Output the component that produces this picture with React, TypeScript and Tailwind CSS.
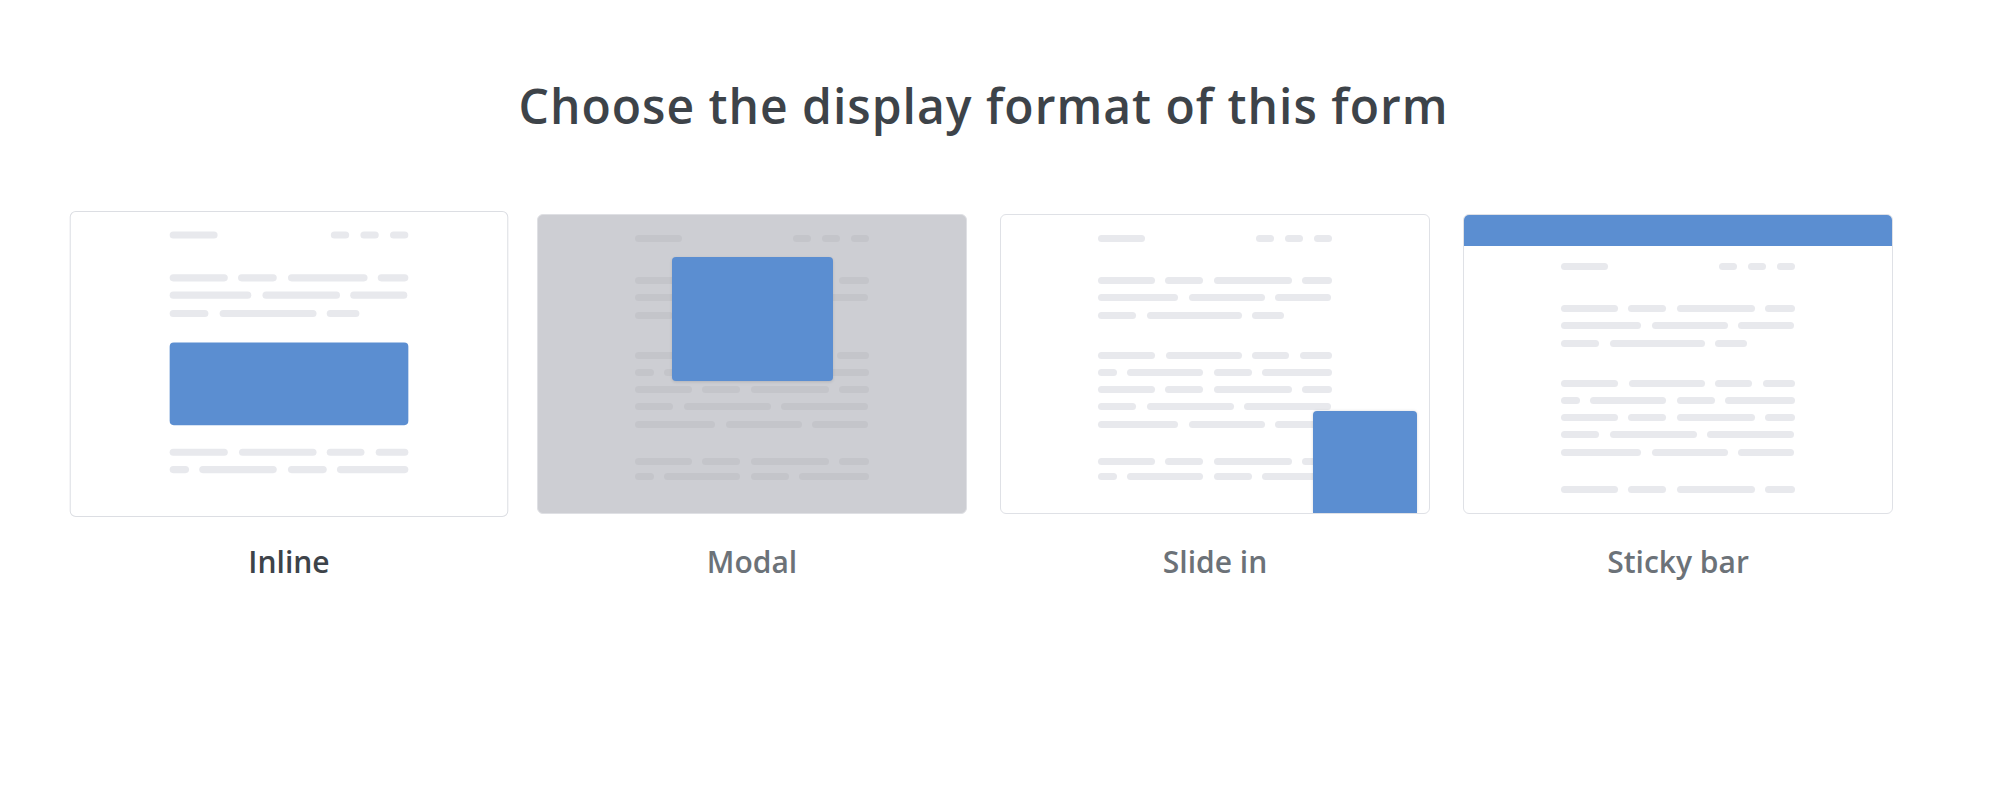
const ROW_A = [57, 38, 78, 30];
const ROW_B = [80, 76, 56];
const ROW_C = [38, 95, 32];
const ROW_D = [57, 76, 37, 32];
const ROW_E = [19, 76, 38, 70];
const ROW_F = [38, 87, 87];

type Tone = "light" | "dark";

const barTone = (tone: Tone) => (tone === "dark" ? "bg-[#c4c5ca]" : "bg-[#e8e9ed]");

function Line({ widths, tone }: { widths: number[]; tone: Tone }) {
  return (
    <div className="flex w-[234px] gap-[10.5px]">
      {widths.map((w, i) => (
        <span key={i} style={{ width: w }} className={`h-[7px] rounded-full ${barTone(tone)}`} />
      ))}
    </div>
  );
}

function Paragraph({ rows, tone, className = "", tight }: { rows: number[][]; tone: Tone; className?: string; tight?: boolean }) {
  return (
    <div className={`flex flex-col ${tight ? "gap-[8.3px]" : "gap-[10.3px]"} ${className}`}>
      {rows.map((r, i) => (
        <Line key={i} widths={r} tone={tone} />
      ))}
    </div>
  );
}

function PageHeader({ tone }: { tone: Tone }) {
  return (
    <div className="flex w-[234px] items-center justify-between">
      <span className={`h-[7px] w-[47px] rounded-full ${barTone(tone)}`} />
      <div className="flex gap-[11px]">
        <span className={`h-[7px] w-[18px] rounded-full ${barTone(tone)}`} />
        <span className={`h-[7px] w-[18px] rounded-full ${barTone(tone)}`} />
        <span className={`h-[7px] w-[18px] rounded-full ${barTone(tone)}`} />
      </div>
    </div>
  );
}

function LongPage({ tone, lastRows }: { tone: Tone; lastRows: number[][] }) {
  return (
    <>
      <PageHeader tone={tone} />
      <Paragraph rows={[ROW_A, ROW_B, ROW_C]} tone={tone} className="mt-[35px]" />
      <Paragraph rows={[ROW_D, ROW_E, ROW_A, ROW_F, ROW_B]} tone={tone} className="mt-[33px]" />
      <Paragraph rows={lastRows} tone={tone} className="mt-[30px]" tight />
    </>
  );
}

const cardBase = "relative flex h-[300px] w-[430px] flex-col items-center overflow-hidden rounded-[6px] border";
const blue = "bg-[#5b8ed1]";

function InlinePreview() {
  return (
    <div className={`${cardBase} scale-[1.02] border-[#dcdee3] bg-white pt-[19px]`}>
      <PageHeader tone="light" />
      <Paragraph rows={[ROW_A, ROW_B, ROW_C]} tone="light" className="mt-[35px]" />
      <div className={`mt-[25px] h-[81px] w-[234px] rounded-[4px] ${blue}`} />
      <Paragraph rows={[ROW_D, ROW_E]} tone="light" className="mt-[23px]" />
    </div>
  );
}

function ModalPreview() {
  return (
    <div className={`${cardBase} border-[#dfe0e4] bg-[#cdced3] pt-[20px]`}>
      <LongPage tone="dark" lastRows={[ROW_A, ROW_E]} />
      <div className={`absolute left-[134px] top-[42px] h-[124px] w-[161px] rounded-[4px] shadow-[0_1px_3px_rgba(0,0,0,0.12)] ${blue}`} />
    </div>
  );
}

function SlideInPreview() {
  return (
    <div className={`${cardBase} border-[#dfe1e6] bg-white pt-[20px]`}>
      <LongPage tone="light" lastRows={[ROW_A, ROW_E]} />
      <div className={`absolute bottom-0 left-[312px] top-[196px] w-[104px] rounded-t-[4px] shadow-[0_0_3px_rgba(0,0,0,0.15)] ${blue}`} />
    </div>
  );
}

function StickyBarPreview() {
  return (
    <div className={`${cardBase} border-[#dfe1e6] bg-white`}>
      <div className={`h-[31px] w-full shrink-0 ${blue}`} />
      <div className="mt-[17px] flex flex-col items-center">
        <LongPage tone="light" lastRows={[ROW_A]} />
      </div>
    </div>
  );
}

const formats = [
  { label: "Inline", preview: <InlinePreview />, active: true },
  { label: "Modal", preview: <ModalPreview /> },
  { label: "Slide in", preview: <SlideInPreview /> },
  { label: "Sticky bar", preview: <StickyBarPreview /> },
];

export default function App() {
  return (
    <div className="min-h-screen w-full bg-white pr-[32px] pt-[74px] font-['Open_Sans',sans-serif]">
      <h1 className="text-center text-[48px] font-semibold leading-[64px] tracking-[1px] text-[#3d4349]">
        Choose the display format of this form
      </h1>
      <div className="mt-[76px] flex justify-center gap-[33px]">
        {formats.map((f) => (
          <button key={f.label} className="flex cursor-pointer flex-col items-center">
            {f.preview}
            <span
              className={`mt-[28px] text-[30px] font-semibold leading-[40px] ${
                f.active ? "text-[#3d4349]" : "text-[#6c7278]"
              }`}
            >
              {f.label}
            </span>
          </button>
        ))}
      </div>
    </div>
  );
}
